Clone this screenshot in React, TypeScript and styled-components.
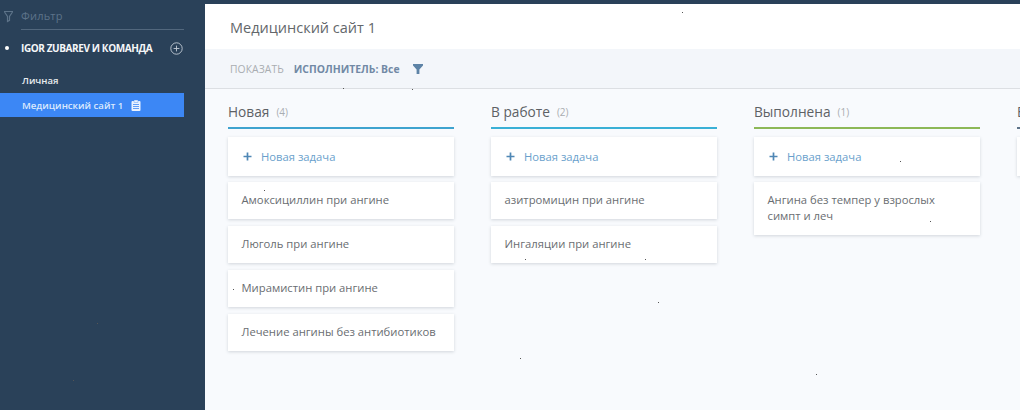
import React from "react";
import styled, { createGlobalStyle } from "styled-components";

const Global = createGlobalStyle`
  html, body { margin: 0; padding: 0; height: 100%; overflow: hidden; }
  body { font-family: "Open Sans", "Liberation Sans", sans-serif; background: #f8fafd; }
  #root { height: 100%; }
`;

const Page = styled.div`
  position: relative;
  display: flex;
  width: 1020px;
  height: 410px;
  overflow: hidden;
  background: #2a4159;
`;

const SpeckLayer = styled.svg`
  position: absolute;
  inset: 0;
  pointer-events: none;
`;

const Sidebar = styled.aside`
  flex: 0 0 205px;
  width: 205px;
  display: flex;
  flex-direction: column;
`;

const FilterRow = styled.div`
  display: flex;
  align-items: center;
  height: 30px;
  margin: 0 21px 0 3px;
  color: #5d7389;
  font-size: 11px;
  gap: 7px;
  padding-top: 3px;
  box-sizing: border-box;
`;

const FilterText = styled.div`
  flex: 1;
  height: 26px;
  line-height: 26px;
  border-bottom: 1px solid #52677d;
  letter-spacing: 0.2px;
`;

const TeamRow = styled.div`
  display: flex;
  align-items: center;
  margin-top: 9px;
  height: 18px;
  padding-left: 5px;
  color: #f4f6f8;
  font-size: 10px;
  font-weight: 700;
  letter-spacing: -0.4px;
`;

const Dot = styled.span`
  width: 4px;
  height: 4px;
  border-radius: 50%;
  background: #fff;
  margin-right: 12px;
`;

const TeamName = styled.span`
  flex: 0 0 149px;
`;

const Personal = styled.div`
  margin-top: 15px;
  height: 18px;
  line-height: 18px;
  padding-left: 22px;
  color: #e8ecf0;
  font-size: 9.5px;
  font-weight: 600;
`;

const ActiveItem = styled.div`
  display: flex;
  align-items: center;
  gap: 8px;
  margin-top: 3px;
  width: 184px;
  height: 24px;
  padding-left: 22px;
  box-sizing: border-box;
  background: #3c87f5;
  color: #dbe9fd;
  font-size: 9.6px;
  font-weight: 600;
`;

const Main = styled.main`
  flex: 1;
  min-width: 0;
  margin-top: 4px;
  display: flex;
  flex-direction: column;
  background: #f8fafd;
`;

const Header = styled.header`
  flex: 0 0 45px;
  display: flex;
  align-items: center;
  padding-left: 25px;
  padding-top: 1px;
  background: #fff;
  color: #63676b;
  font-size: 14.5px;
  box-sizing: border-box;
`;

const Toolbar = styled.div`
  flex: 0 0 40px;
  display: flex;
  align-items: center;
  padding-left: 25px;
  padding-top: 1px;
  box-sizing: border-box;
  background: #f3f6fa;
  border-bottom: 1px solid #dcdfe3;
  font-size: 10.3px;
`;

const ShowLabel = styled.span`
  color: #a9adb1;
  margin-right: 10px;
  letter-spacing: 0.1px;
`;

const Assignee = styled.span`
  color: #7189a5;
  font-weight: 700;
  font-size: 10.4px;
  margin-right: 12px;
`;

const Board = styled.div`
  display: flex;
  gap: 37px;
  padding: 9px 0 0 23px;
`;

const Column = styled.section`
  flex: 0 0 226px;
  width: 226px;
`;

const ColumnHead = styled.div<{ $color: string }>`
  height: 31px;
  padding-bottom: 3px;
  box-sizing: border-box;
  display: flex;
  align-items: center;
  gap: 7px;
  border-bottom: 2px solid ${(p) => p.$color};
  margin-bottom: 8px;
  color: #5d6165;
  font-size: 13.7px;
  white-space: nowrap;
`;

const Count = styled.span`
  color: #a9adb1;
  font-size: 10px;
  padding-top: 2px;
`;

const Card = styled.div`
  background: #fff;
  box-shadow: 0 1px 3px rgba(60, 70, 85, 0.2);
  padding: 10px 13.5px 11px;
  margin-bottom: 7px;
  font-size: 11.25px;
  line-height: 16px;
  color: #696d71;
`;

const AddCard = styled(Card)`
  display: flex;
  align-items: center;
  gap: 9px;
  height: 39px;
  padding: 0 15px;
  box-sizing: border-box;
  margin-bottom: 6px;
  color: #6a9fcc;
`;

const Filter = ({ size, color }: { size: number; color: string }) => (
  <svg width={size} height={size} viewBox="0 0 12 12" fill={color}>
    <path d="M1 1h10v1.6L7.4 6.4V11H4.6V6.4L1 2.6z" />
  </svg>
);

const FilterOutline = () => (
  <svg width="11" height="13" viewBox="0 0 11 13" fill="none" stroke="#5d7389" strokeWidth="1.2">
    <path d="M1 1.5h9M1.5 2l3 4.5V11.5l2-1.2V6.5l3-4.5" />
  </svg>
);

const PlusCircle = () => (
  <svg width="13" height="13" viewBox="0 0 13 13" fill="none" stroke="#c3ccd6" strokeWidth="0.9">
    <circle cx="6.5" cy="6.5" r="5.7" />
    <path d="M6.5 3.6v5.8M3.6 6.5h5.8" />
  </svg>
);

const Clipboard = () => (
  <svg width="10" height="11" viewBox="0 0 10 11">
    <rect x="0.5" y="1" width="9" height="10" rx="1" fill="#eaf2fe" />
    <rect x="3" y="0" width="4" height="2.4" fill="#eaf2fe" stroke="#3c87f5" strokeWidth="0.4" />
    <path d="M2 4.5h6M2 6.5h6M2 8.5h6" stroke="#3c87f5" strokeWidth="0.8" />
  </svg>
);

const Plus = () => (
  <svg width="9" height="9" viewBox="0 0 9 9" stroke="#4f87b5" strokeWidth="1.7">
    <path d="M4.5 0.5v8M0.5 4.5h8" />
  </svg>
);

const specks = [
  [682, 12], [343, 88], [264, 190], [900, 161], [930, 221], [233, 289],
  [525, 259], [645, 259], [658, 302], [520, 358], [816, 374], [73, 380], [97, 323], [412, 89],
];

const columns = [
  {
    title: "Новая",
    count: 4,
    color: "#3fa3cf",
    tasks: ["Амоксициллин при ангине", "Люголь при ангине", "Мирамистин при ангине", "Лечение ангины без антибиотиков"],
  },
  { title: "В работе", count: 2, color: "#3ab0d6", tasks: ["азитромицин при ангине", "Ингаляции при ангине"] },
  { title: "Выполнена", count: 1, color: "#8db857", tasks: ["Ангина без темпер у взрослых симпт и леч"] },
  { title: "Бэклог", count: 0, color: "#5d7389", tasks: [] },
];

export default function App() {
  return (
    <Page>
      <Global />
      <Sidebar>
        <FilterRow>
          <FilterOutline />
          <FilterText>Фильтр</FilterText>
        </FilterRow>
        <TeamRow>
          <Dot />
          <TeamName>IGOR ZUBAREV И КОМАНДА</TeamName>
          <PlusCircle />
        </TeamRow>
        <Personal>Личная</Personal>
        <ActiveItem>
          Медицинский сайт 1
          <Clipboard />
        </ActiveItem>
      </Sidebar>
      <Main>
        <Header>Медицинский сайт 1</Header>
        <Toolbar>
          <ShowLabel>ПОКАЗАТЬ</ShowLabel>
          <Assignee>ИСПОЛНИТЕЛЬ: Все</Assignee>
          <Filter size={12} color="#5d83a6" />
        </Toolbar>
        <Board>
          {columns.map((c) => (
            <Column key={c.title}>
              <ColumnHead $color={c.color}>
                {c.title}
                <Count>({c.count})</Count>
              </ColumnHead>
              <AddCard>
                <Plus />
                Новая задача
              </AddCard>
              {c.tasks.map((t) => (
                <Card key={t}>{t}</Card>
              ))}
            </Column>
          ))}
        </Board>
      </Main>
      <SpeckLayer width="1020" height="410">
        {specks.map(([x, y]) => (
          <rect key={`${x}-${y}`} x={x} y={y} width="1" height="1" fill="#555" />
        ))}
      </SpeckLayer>
    </Page>
  );
}
